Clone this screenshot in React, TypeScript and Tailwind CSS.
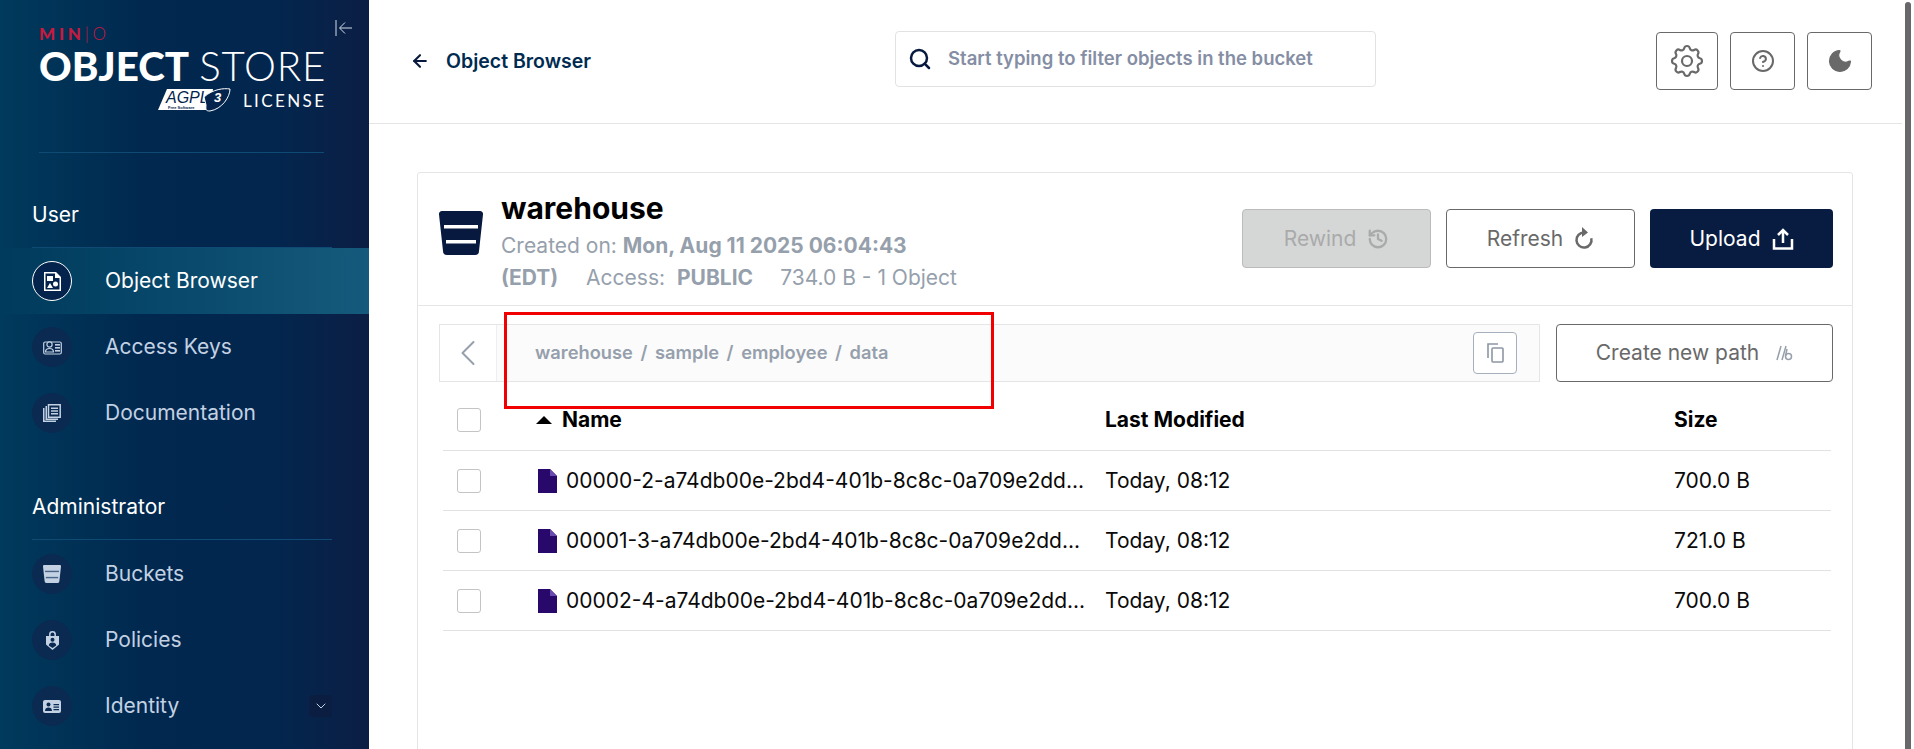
import type { ReactNode } from "react";
import { ArrowLeft, ChevronDown, ChevronLeft, Search, CircleHelp, Moon, History } from "lucide-react";
import { HiOutlineCog } from "react-icons/hi";

const files = [
  { name: "00000-2-a74db00e-2bd4-401b-8c8c-0a709e2dd...", size: "700.0 B" },
  { name: "00001-3-a74db00e-2bd4-401b-8c8c-0a709e2dd...", size: "721.0 B" },
  { name: "00002-4-a74db00e-2bd4-401b-8c8c-0a709e2dd...", size: "700.0 B" },
];

function ObjectsIcon() {
  return (
    <svg width="17" height="19" viewBox="0 0 17 19" className="text-white">
      <path fill="currentColor" fillRule="evenodd" d="M0 0h12l5 5v14H0zM1.500 1.500v16h14V6h-4.500V1.500z" />
      <rect x="3" y="4" width="6" height="5" fill="currentColor" />
      <circle cx="11.500" cy="12" r="2.500" fill="currentColor" />
      <path fill="currentColor" d="M6 11l3 5H3z" />
    </svg>
  );
}

function KeysIcon() {
  return (
    <svg width="19" height="15" viewBox="0 0 19 15" className="text-[#c3d1e3]">
      <rect x="0.700" y="2" width="17.600" height="12" rx="1.500" fill="none" stroke="currentColor" strokeWidth="1.200" />
      <circle cx="6.500" cy="4.500" r="2.600" fill="#0a2a52" stroke="currentColor" strokeWidth="1.200" />
      <path fill="none" stroke="currentColor" strokeWidth="1.200" d="M2.500 12c0-2.500 1.500-3.500 4-3.500s4 1 4 3.500z" />
      <rect x="12" y="4" width="5" height="1.600" fill="currentColor" />
      <rect x="12" y="7" width="5" height="1.600" fill="currentColor" />
      <rect x="12" y="10" width="5" height="1.600" fill="currentColor" />
    </svg>
  );
}

function DocsIcon() {
  return (
    <svg width="18" height="18" viewBox="0 0 18 18" className="text-[#c3d1e3]">
      <path fill="currentColor" d="M0 4h1.500v12.500H13V18H0z" />
      <path fill="currentColor" d="M2.500 2h1.500v12.500H15V16H2.500z" />
      <path fill="none" stroke="currentColor" strokeWidth="1.500" d="M5.500.8h11.700v12.400H5.500z" />
      <path fill="currentColor" d="M8 3.500h7V5H8zM8 6.300h7v1.500H8zM8 9.100h7v1.500H8z" />
    </svg>
  );
}

function BucketIcon({ className, bar }: { className: string; bar: string }) {
  return (
    <svg viewBox="0 0 44 44" className={className}>
      <path fill="currentColor" d="M3 0h38a3 3 0 0 1 3 3.400L40 40a4 4 0 0 1-4 4H8a4 4 0 0 1-4-4L0 3.400A3 3 0 0 1 3 0z" />
      <rect x="5" y="14" width="34" height="3.500" fill={bar} />
      <rect x="7" y="29" width="30" height="3.500" fill={bar} />
    </svg>
  );
}

function PolicyIcon() {
  return (
    <svg width="13" height="19" viewBox="0 0 13 19" className="text-[#c3d1e3]">
      <path fill="none" stroke="currentColor" strokeWidth="1.500" d="M3.800 5V3.500a2.700 2.700 0 0 1 5.400 0V5" />
      <path fill="currentColor" d="M0 5h13v8.500L6.500 19 0 13.500z" />
      <circle cx="6.500" cy="8.800" r="2" fill="#0a2a52" />
      <path fill="#0a2a52" d="M2.800 14.500c0-2 1.600-3 3.700-3s3.700 1 3.700 3L6.500 17z" />
    </svg>
  );
}

function IdentityIcon() {
  return (
    <svg width="18" height="13" viewBox="0 0 18 13" className="text-[#c3d1e3]">
      <rect width="18" height="13" rx="2" fill="currentColor" />
      <circle cx="5.500" cy="4.500" r="2" fill="#0a2a52" />
      <path fill="#0a2a52" d="M2 11c0-2.500 1.500-3.500 3.500-3.500S9 8.500 9 11z" />
      <path fill="#0a2a52" d="M10.500 4h5.500v1.200h-5.500zM10.500 6.500h5.500v1.200h-5.500zM10.500 9h5.500v1.200h-5.500z" />
    </svg>
  );
}

function NavItem({ icon, label, active, chevron }: { icon: ReactNode; label: string; active?: boolean; chevron?: boolean }) {
  return (
    <div
      className={`flex h-[66px] items-center pl-8 pr-[37px] ${active ? "bg-gradient-to-r from-[#003a5c] to-[#155a7c] text-white" : "text-[#c3d1e3]"}`}
    >
      <div
        className={`flex h-10 w-10 shrink-0 items-center justify-center rounded-full ${active ? "border border-white bg-[#04244d]" : "border border-[#0a2a52] bg-[#0a2a52]"}`}
      >
        {icon}
      </div>
      <span className="ml-[33px] flex-1 text-[21px]">{label}</span>
      {chevron && (
        <div className="flex h-[22px] w-[23px] items-center justify-center rounded bg-[#0b1d40]">
          <ChevronDown className="h-4 w-4 text-[#c3d1e3]" strokeWidth={1.500} />
        </div>
      )}
    </div>
  );
}

function Sidebar() {
  return (
    <aside className="flex h-full w-[369px] shrink-0 flex-col overflow-hidden bg-[linear-gradient(90deg,#003a5c_0%,#01284f_40%,#03264e_75%,#0c1e44_100%)] text-white">
      <div className="relative h-[152px] shrink-0 pl-[39px] pt-[27px] font-['Lato',sans-serif]">
        <button className="absolute left-[335px] top-[19px] text-[#d5dde8]">
          <svg width="18" height="18" viewBox="0 0 18 18" fill="none" stroke="currentColor" strokeWidth="1">
            <path d="M1 1v16M17 9H5M10 3.500 4.500 9l5.500 5.500" />
          </svg>
        </button>
        <div className="h-[14px] text-[17px] font-black leading-[14px] tracking-[0.22em] text-[#c8193f]">
          MIN<span className="font-light">|O</span>
        </div>
        <div className="mt-[1px] flex h-[48px] items-baseline text-[40.3px] leading-[48px]">
          <span className="font-black">OBJECT</span>
          <span className="ml-[10px] font-light tracking-[0.02em]">STORE</span>
        </div>
        <div className="-mt-[2px] flex items-center pl-[119px]">
          <svg width="73" height="24" viewBox="0 0 73 24">
            <path fill="#fff" d="M9 1h46l-3 21H0z" />
            <text x="8" y="15" fontFamily="Liberation Sans, sans-serif" fontSize="16" fontStyle="italic" fill="#04244d">AGPL</text>
            <text x="10" y="21" fontFamily="Liberation Sans, sans-serif" fontSize="4" fontWeight="700" fill="#04244d">Free Software</text>
            <path fill="#04244d" stroke="#fff" strokeWidth="1" d="M46 9C55 1 66 0 72 1c0 8-8 20-20 22-5 0-4-2-4-6z" />
            <text x="56" y="14" fontFamily="Liberation Sans, sans-serif" fontSize="13" fontWeight="700" fontStyle="italic" fill="#fff">3</text>
          </svg>
          <span className="ml-[12px] text-[17px] leading-none tracking-[0.14em]">LICENSE</span>
        </div>
      </div>
      <div className="ml-[39px] mr-[45px] h-px shrink-0 bg-[#0f4a74]" />

      <div className="flex h-[95px] shrink-0 flex-col justify-end font-['Inter',sans-serif]">
        <div className="ml-8 mr-[37px] flex h-[45px] items-start border-b border-[#0f4a74] text-[21px] leading-[24px]">User</div>
      </div>
      <nav className="flex shrink-0 flex-col font-['Inter',sans-serif]">
        <NavItem active icon={<ObjectsIcon />} label="Object Browser" />
        <NavItem icon={<KeysIcon />} label="Access Keys" />
        <NavItem icon={<DocsIcon />} label="Documentation" />
      </nav>
      <div className="ml-8 mr-[37px] mt-[47px] flex h-[47px] shrink-0 items-start border-b border-[#0f4a74] pt-[2px] font-['Inter',sans-serif] text-[21px] leading-[24px]">
        Administrator
      </div>
      <nav className="flex shrink-0 flex-col pt-[1px] font-['Inter',sans-serif]">
        <NavItem icon={<BucketIcon className="h-[18px] w-[18px] text-[#c3d1e3]" bar="#4a6488" />} label="Buckets" />
        <NavItem icon={<PolicyIcon />} label="Policies" />
        <NavItem chevron icon={<IdentityIcon />} label="Identity" />
      </nav>
    </aside>
  );
}

function OutlineButton({ children, className }: { children: ReactNode; className: string }) {
  return (
    <button className={`flex items-center justify-center rounded-[4px] border border-[#696969] bg-white text-[21px] text-[#696969] ${className}`}>
      {children}
    </button>
  );
}

function ObjectsTable() {
  return (
    <div className="ml-[24px] mr-[21px] mt-[1px]">
      <div className="ml-[1px] flex h-[68px] items-center border-b border-[#e2e2e2] pt-[6px] text-[21px] font-bold text-black">
        <div className="ml-[14px] h-6 w-6 rounded-[3px] border border-[#c4c4c4] bg-white" />
        <div className="ml-[55px] flex w-[569px] items-center">
          <svg width="16" height="8" viewBox="0 0 16 8">
            <path d="M8 0l8 8H0z" fill="#000" />
          </svg>
          <span className="ml-[10px]">Name</span>
        </div>
        <div className="w-[569px]">Last Modified</div>
        <div>Size</div>
      </div>
      {files.map((f) => (
        <div key={f.name} className="ml-[1px] flex h-[60px] items-center border-b border-[#e2e2e2] text-[21px] text-[#0a0a0a]">
          <div className="ml-[14px] h-6 w-6 rounded-[3px] border border-[#c4c4c4] bg-white" />
          <div className="ml-[57px] flex w-[567px] items-center">
            <svg width="19" height="24" viewBox="0 0 19 24">
              <path d="M0 0h12l7 7v17H0z" fill="#28096b" />
              <path d="M12 0l7 7h-7z" fill="#6a4cb0" />
            </svg>
            <span className="ml-[9px] whitespace-nowrap">{f.name}</span>
          </div>
          <div className="w-[569px]">Today, 08:12</div>
          <div>{f.size}</div>
        </div>
      ))}
    </div>
  );
}

export default function App() {
  return (
    <div className="relative flex h-screen w-full overflow-hidden bg-white font-['Inter',sans-serif]">
      <Sidebar />
      <main className="flex h-full min-w-0 flex-1 flex-col">
        {/* Header */}
        <header className="flex h-[124px] shrink-0 items-center border-b border-[#e5e5e5] pb-[2px]">
          <ArrowLeft className="ml-[41px] h-5 w-5 text-[#07193e]" strokeWidth={2.500} />
          <span className="ml-[16px] w-[449px] pt-[3px] text-[19.5px] font-semibold text-[#002b50]">Object Browser</span>
          <div className="-mt-[3px] flex h-[56px] w-[481px] items-center rounded-[4px] border border-[#e2e2e2]">
            <Search className="ml-[12px] h-6 w-6 text-[#07193e]" strokeWidth={2.500} />
            <span className="ml-[16px] text-[18.5px] font-semibold text-[#858ea4]">Start typing to filter objects in the bucket</span>
          </div>
          <div className="ml-auto flex items-center pr-[30px]">
            <OutlineButton className="h-[58px] w-[62px]"><HiOutlineCog className="h-10 w-10" style={{ strokeWidth: 1.300 }} /></OutlineButton>
            <OutlineButton className="ml-[12px] h-[58px] w-[65px]"><CircleHelp className="h-6 w-6" strokeWidth={2} /></OutlineButton>
            <OutlineButton className="ml-[12px] h-[58px] w-[65px]"><Moon className="h-7 w-7 fill-[#696969]" strokeWidth={1} /></OutlineButton>
          </div>
        </header>

        {/* Bucket card */}
        <section className="ml-[48px] mr-[49px] mt-[48px] flex min-h-0 flex-1 flex-col">
          <div className="flex h-[134px] shrink-0 items-start rounded-t-[3px] border border-[#e5e5e5] pl-[21px] pr-[19px]">
            <BucketIcon className="mt-[38px] h-[44px] w-[44px] shrink-0 text-[#07193e]" bar="#ffffff" />
            <div className="ml-[18px] w-[536px] pt-[14px]">
              <div className="text-[30px] font-bold leading-[43px] text-black">warehouse</div>
              <div className="whitespace-nowrap text-[21px] leading-[32px] text-[#969fac]">
                <div>
                  Created on: <b className="font-bold">Mon, Aug 11 2025 06:04:43</b>
                </div>
                <div>
                  <b className="font-bold">(EDT)</b>
                  <span className="ml-[28px]">Access: </span>
                  <b className="ml-[6px] font-bold">PUBLIC</b>
                  <span className="ml-[27px]">734.0 B - 1 Object</span>
                </div>
              </div>
            </div>
            <div className="ml-auto mt-[36px] flex gap-[15px]">
              <button className="flex h-[59px] w-[189px] items-center justify-center gap-[11px] rounded-[4px] border border-[#bbbbbb] bg-[#d5d7d7] text-[21px] text-[#aaaaaa]">
                Rewind <History className="h-[22px] w-[22px]" strokeWidth={2.500} />
              </button>
              <OutlineButton className="h-[59px] w-[189px] gap-[11px]">
                Refresh
                <svg width="20" height="24" viewBox="0 0 20 24" fill="none" stroke="#696969" strokeWidth="2.500">
                  <path d="M10 5.500a7.500 7.500 0 1 0 7.300 5.800" />
                  <path fill="#696969" stroke="none" d="M8 0l6 5.500L8 10z" />
                </svg>
              </OutlineButton>
              <button className="flex h-[59px] w-[183px] items-center justify-center gap-[11px] rounded-[4px] bg-[#081c42] text-[21px] text-white">
                Upload
                <svg width="22" height="22" viewBox="0 0 22 22" fill="none" stroke="#fff" strokeWidth="2.500">
                  <path d="M11 15V2M6 7l5-5 5 5M2 11v9.500h18V11" />
                </svg>
              </button>
            </div>
          </div>

          <div className="flex min-h-0 flex-1 flex-col border-x border-[#e5e5e5] pt-[18px]">
            <div className="ml-[21px] mr-[19px] flex h-[58px] shrink-0 gap-[16px]">
              <div className="flex flex-1 items-center border border-[#e5e5e5] bg-[#fbfbfb]">
                <div className="flex h-full w-[57px] items-center justify-center border-r border-[#eeeeee] bg-white">
                  <ChevronLeft className="h-11 w-11 text-[#969fac]" strokeWidth={1.100} />
                </div>
                <span className="ml-[38px] flex-1 text-[18.3px] font-semibold text-[#969fac]">
                  warehouse <span className="mx-[3px]">/</span> sample <span className="mx-[3px]">/</span> employee <span className="mx-[3px]">/</span> data
                </span>
                <button className="mr-[22px] flex h-[42px] w-[44px] items-center justify-center rounded-[4px] border border-[#a6b0bc] bg-white">
                  <svg width="17" height="20" viewBox="0 0 17 20" fill="none" stroke="#8d96a3" strokeWidth="1.600">
                    <path d="M1 15V1h10" />
                    <rect x="5" y="5" width="11" height="14" rx="1" />
                  </svg>
                </button>
              </div>
              <OutlineButton className="w-[277px] shrink-0 gap-[14px]">
                Create new path
                <svg width="20" height="18" viewBox="0 0 20 18" fill="none" stroke="#969fac" strokeWidth="1.500">
                  <path d="M1.500 8h.01M1.500 13h.01M8 2 4 16M13 2 9 16" />
                  <circle cx="15.500" cy="12.500" r="3" />
                  <path d="M12.500 12 14 5" />
                </svg>
              </OutlineButton>
            </div>
            <ObjectsTable />
          </div>
        </section>
      </main>

      {/* Scrollbar */}
      <div className="flex h-full w-[12px] shrink-0 justify-start pl-[3px] pt-[2px]">
        <div className="h-full w-[6px] rounded-t-[3px] bg-[#68686a]" />
      </div>

      {/* Red annotation box */}
      <div className="pointer-events-none absolute left-[504px] top-[312px] h-[97px] w-[490px] border-[3px] border-[#f00000]" />
    </div>
  );
}
